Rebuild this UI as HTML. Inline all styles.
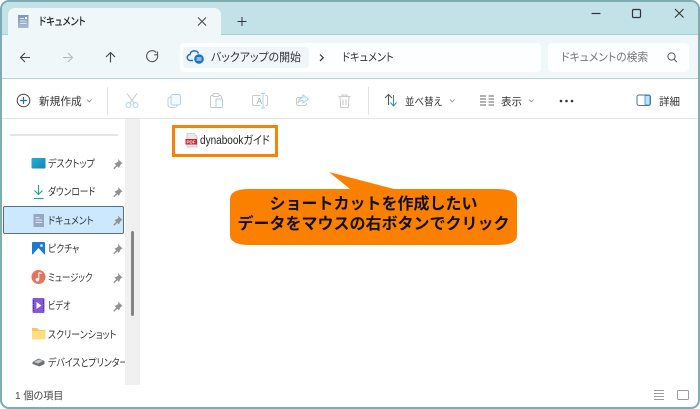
<!DOCTYPE html>
<html lang="ja"><head><meta charset="utf-8">
<style>
html,body{margin:0;padding:0;background:#fff}
body{width:700px;height:409px;overflow:hidden;position:relative;font-family:"Liberation Sans","Noto Sans CJK JP",sans-serif;color:#2b2b2b}
#win{position:absolute;left:0;top:0;width:700px;height:409px;box-sizing:border-box;border:2px solid #7fabb3;border-radius:9px;overflow:hidden;background:#fff}
.a{position:absolute}
.t{position:absolute;white-space:nowrap;font-size:11px;line-height:14px;font-feature-settings:"palt";color:#333;transform-origin:left center}
svg{position:absolute;overflow:visible}
</style></head><body>
<div id="win"></div>
<div class="a" style="left:2px;top:2px;width:696px;height:33px;background:#c3e2e8;border-radius:7px 7px 0 0"></div>
<div class="a" style="left:2px;top:34px;width:696px;height:1px;background:#a9cfd6"></div>
<div class="a" style="left:2px;top:35px;width:696px;height:43px;background:#eff7f9"></div>
<div class="a" style="left:2px;top:78px;width:696px;height:1px;background:#b5d3d9"></div>
<div class="a" style="left:8px;top:8px;width:213px;height:28px;background:#eff7f9;border-radius:7px 7px 0 0"></div>
<div class="a" style="left:2px;top:118px;width:696px;height:1px;background:#e3e6e6"></div>
<div class="a" style="left:180px;top:43px;width:361px;height:29px;background:#fcfeff;border-radius:4px"></div>
<div class="a" style="left:183px;top:47px;width:126px;height:21px;background:#eff5f8;border-radius:4px"></div>
<div class="a" style="left:548px;top:43px;width:141px;height:29px;background:#fcfeff;border-radius:4px"></div>

<svg style="left:0;top:0" width="700" height="120" fill="none">
<defs><linearGradient id="d1" x1="0" y1="0" x2="0" y2="1"><stop offset="0" stop-color="#8096b8"/><stop offset="1" stop-color="#a9bbd3"/></linearGradient></defs>
<rect x="18" y="15" width="10.5" height="13" fill="url(#d1)"/><rect x="20" y="18" width="4" height="1" fill="#dfe7f1"/><rect x="20" y="20.5" width="6.5" height="1" fill="#dfe7f1"/><rect x="20" y="23" width="6.5" height="1" fill="#dfe7f1"/><rect x="25" y="17" width="2" height="2" fill="#fff"/>
<path d="M198 17.500l8 8M206 17.500l-8 8" stroke="#444" stroke-width="1"/>
<path d="M237.500 21.500h9M242 17v9" stroke="#333" stroke-width="1"/>
<path d="M591.500 13.500h9" stroke="#333" stroke-width="1.200"/>
<rect x="632.500" y="9.500" width="8" height="8" rx="1.200" stroke="#333" stroke-width="1.200"/>
<path d="M675 9l8.500 8.500M683.500 9l-8.500 8.500" stroke="#333" stroke-width="1.100"/>
<path d="M30 57.500H21M25 53l-4.500 4.500L25 62" stroke="#444" stroke-width="1.100"/>
<path d="M63 57.500h9.500M68 53l4.500 4.500L68 62" stroke="#b4bcbf" stroke-width="1.100"/>
<path d="M110.500 62.500v-10M106 57l4.500-4.500L115 57" stroke="#444" stroke-width="1.100"/>
<path d="M157.500 55a5.500 5.500 0 1 1-1.200-2.400M157.500 51.500v3.300h-3.300" stroke="#555" stroke-width="1.100"/>
<path d="M193 60.500h-2.500a3 3 0 0 1-.5-6 4.500 4.500 0 0 1 8.500-1" stroke="#1f6fc4" stroke-width="1.500"/>
<circle cx="199" cy="59" r="4.800" fill="#1773c9"/><path d="M196.500 58h5M196.500 60h5" stroke="#fff" stroke-width="1"/>
<path d="M320 54.500l3.200 3.200-3.200 3.200" stroke="#333" stroke-width="1.200"/>
<circle cx="671.500" cy="56.500" r="3.600" stroke="#555" stroke-width="1"/><path d="M674.200 59.300l2.600 2.800" stroke="#555" stroke-width="1"/>
<circle cx="23.500" cy="100.500" r="6.300" stroke="#444" stroke-width="1"/><path d="M20 100.500h7M23.500 97v7" stroke="#1a73c9" stroke-width="1.200"/>
<path d="M87 99.500l2.300 2.300 2.300-2.300" stroke="#888" stroke-width=".8"/>
<path d="M107.500 87v28" stroke="#e1e4e5"/>
<path d="M368.500 87v28" stroke="#e1e4e5"/>
<path d="M127 93.500l7.500 10M137 93.500l-7.500 10" stroke="#c4c8ca" stroke-width="1"/>
<circle cx="128.500" cy="105" r="2.500" stroke="#a8d0f2"/><circle cx="135.500" cy="105" r="2.500" stroke="#a8d0f2"/>
<rect x="168" y="97" width="9" height="10.500" rx="2.500" stroke="#c8cacb"/><rect x="171" y="94.500" width="9.500" height="10.500" rx="2" fill="#f3f9fe" stroke="#a8d0f2"/>
<rect x="210.500" y="95.500" width="11" height="12" rx="1.500" stroke="#c8cacb"/><rect x="213" y="93.500" width="6" height="3" rx="1" fill="#fff" stroke="#c8cacb"/><rect x="216" y="99" width="6.500" height="8.500" rx="1" fill="#fff" stroke="#a8d0f2"/>
<path d="M260.500 95.500h-6.500a1.500 1.500 0 0 0-1.500 1.500v7a1.500 1.500 0 0 0 1.500 1.500h6.500M265.500 95.500h.5a1.500 1.500 0 0 1 1.500 1.500v7a1.500 1.500 0 0 1-1.500 1.500h-.5" stroke="#c8cacb"/><path d="M263 93.500v14.500M261 93.500h4M261 108h4" stroke="#a8d0f2"/>
<path d="M303 97.500h-5a1.500 1.500 0 0 0-1.500 1.500v5a1.500 1.500 0 0 0 1.500 1.500h7a1.500 1.500 0 0 0 1.500-1.500v-1" stroke="#c8cacb"/><path d="M303 97.500v-2.500l5.500 4-5.500 4v-2.500c-2.500 0-4 .8-5 2.500 .5-3 2-5 5-5.500z" stroke="#a8d0f2" fill="#f3f9fe"/>
<path d="M338.500 96.500h12M342 96.500v-1.500h5v1.500M340 96.500l.7 11h7.600l.7-11M343 99.500v5.500M346 99.500v5.500" stroke="#c8cacb"/>
<path d="M388.500 105V94.500M385 98l3.500-3.500L392 98" stroke="#555" stroke-width="1"/><path d="M393.500 95v11M390.500 102.500l3 3.500 3-3.500" stroke="#2a86d8" stroke-width="1"/>
<path d="M450 99.500l2.300 2.300 2.300-2.300" stroke="#888" stroke-width=".8"/>
<path d="M480 96h6M480 99h6M480 102h6M480 105h6M488.500 96h5.500M488.500 99h5.500M488.500 102h5.500M488.500 105h5.500" stroke="#666" stroke-width=".9"/>
<path d="M529 99.500l2.300 2.300 2.300-2.300" stroke="#888" stroke-width=".8"/>
<circle cx="561" cy="101" r="1.300" fill="#333"/><circle cx="566.500" cy="101" r="1.300" fill="#333"/><circle cx="572" cy="101" r="1.300" fill="#333"/>
<rect x="637" y="95" width="13.500" height="10.500" rx="2" stroke="#55707f"/><rect x="645" y="95.500" width="5" height="9.500" rx="1" fill="#bfe0f7" stroke="#2a86d8" stroke-width=".8"/>
<text x="256.500" y="104" font-size="8.500" fill="#a9adb0" font-family="Liberation Sans">A</text>
</svg>

<div class="t" style="left:39px;top:15px;font-size:11px;color:#222;font-weight:500;transform:scaleX(.83)">ドキュメント</div>
<div class="t" style="left:211px;top:51px;font-size:11.500px;transform:scaleX(.95)">バックアップの開始</div>
<div class="t" style="left:342px;top:51px;font-size:11.500px;transform:scaleX(.88)">ドキュメント</div>
<div class="t" style="left:561px;top:51px;font-size:11.500px;color:#777;transform:scaleX(.94)">ドキュメントの検索</div>
<div class="t" style="left:39px;top:95px;font-size:11px;transform:scaleX(.97)">新規作成</div>
<div class="t" style="left:405px;top:95px;font-size:10.500px;transform:scaleX(.9)">並べ替え</div>
<div class="t" style="left:501px;top:95px;font-size:10.500px">表示</div>
<div class="t" style="left:659px;top:95px;font-size:10.500px">詳細</div>

<div class="a" style="left:10px;top:134px;width:108px;height:2px;background:#e6e6e6"></div>
<div class="a" style="left:125px;top:119px;width:15px;height:266px;background:#f0f0f0"></div>
<div class="a" style="left:131px;top:231px;width:3px;height:85px;background:#858585;border-radius:2px"></div>
<div class="a" style="left:3px;top:206px;width:121px;height:28px;box-sizing:border-box;background:#cce8ff;border:1px solid #5b6f7a;border-radius:2px"></div>

<svg style="left:0;top:120px" width="140" height="270" fill="none">
<defs><linearGradient id="g1" x1="0" y1="0" x2="1" y2="1"><stop offset="0" stop-color="#1fb5d8"/><stop offset="1" stop-color="#1a7fb8"/></linearGradient></defs>
<rect x="31.500" y="38" width="14" height="10.500" rx="1" fill="url(#g1)"/>
<path d="M38.500 65v9M34.500 70.500l4 4 4-4" stroke="#12a785" stroke-width="1.100"/><path d="M34 78.500h9.500" stroke="#12a785" stroke-width="1.100"/>
<rect x="33.500" y="94" width="10.500" height="13" fill="#93a8c6"/><rect x="35.500" y="97" width="4" height="1" fill="#dfe7f1"/><rect x="35.500" y="99.500" width="6.500" height="1" fill="#dfe7f1"/><rect x="35.500" y="102" width="6.500" height="1" fill="#dfe7f1"/>
<rect x="32" y="122" width="13" height="13" rx="1" fill="#1f78d1"/><path d="M32 135l6.500-7 6.500 7z" fill="#fff"/><circle cx="41.500" cy="125.500" r="1.300" fill="#fff"/>
<circle cx="38.500" cy="157" r="7" fill="#e1755e"/><path d="M38.800 152.500v7" stroke="#fff" stroke-width="1"/><path d="M38.800 152.500l3 1" stroke="#fff" stroke-width="1"/><circle cx="37.300" cy="159.800" r="1.700" fill="#fff"/>
<rect x="32.500" y="178" width="12" height="15" rx="1" fill="#8557d2"/><path d="M36.500 182v7l5-3.500z" fill="#fff"/><path d="M33.500 180v11M43.500 180v11" stroke="#4d2a96" stroke-width="1" stroke-dasharray="1.500 1"/>
<path d="M32 208h5l2 2h6.500v9.500H32z" fill="#f1c95a"/><path d="M32 211h13.500v8.500H32z" fill="#fbdf83"/>
<path d="M32.500 242l6-3.500 6 2.500v3l-5 2.500-7-2.500z" fill="#6e7376"/><path d="M34 242l5-2.500 4 1.500-5 2.500z" fill="#c5c9cb"/>
<g fill="#8f9396">
<path d="M118 39l4.500 4.500-1.500.6-1.500 2.400-.5 1.500-1.700-1.700-3 2.900-1-1 2.900-3-1.700-1.700 1.500-.5 2.400-1.500z"/>
<path d="M118 67l4.500 4.500-1.500.6-1.500 2.400-.5 1.500-1.700-1.700-3 2.900-1-1 2.900-3-1.700-1.700 1.500-.5 2.400-1.500z"/>
<path d="M118 95.500l4.500 4.500-1.500.6-1.500 2.400-.5 1.500-1.700-1.700-3 2.900-1-1 2.900-3-1.700-1.700 1.500-.5 2.400-1.500z"/>
<path d="M118 124l4.500 4.500-1.500.6-1.500 2.400-.5 1.500-1.700-1.700-3 2.900-1-1 2.900-3-1.700-1.700 1.500-.5 2.400-1.500z"/>
<path d="M118 153l4.500 4.500-1.500.6-1.500 2.400-.5 1.500-1.700-1.700-3 2.900-1-1 2.900-3-1.700-1.700 1.500-.5 2.400-1.500z"/>
<path d="M118 181.500l4.500 4.500-1.500.6-1.500 2.400-.5 1.500-1.700-1.700-3 2.900-1-1 2.900-3-1.700-1.700 1.500-.5 2.400-1.500z"/>
</g>
</svg>
<div class="t" style="left:48px;top:157px;font-size:10.500px;transform:scaleX(.855)">デスクトップ</div>
<div class="t" style="left:48px;top:185px;font-size:10.500px;transform:scaleX(.825)">ダウンロード</div>
<div class="t" style="left:48px;top:214px;font-size:10.500px;transform:scaleX(.85)">ドキュメント</div>
<div class="t" style="left:48px;top:242px;font-size:10.500px;transform:scaleX(.84)">ピクチャ</div>
<div class="t" style="left:48px;top:271px;font-size:10.500px;transform:scaleX(.8)">ミュージック</div>
<div class="t" style="left:48px;top:299px;font-size:10.500px;transform:scaleX(.77)">ビデオ</div>
<div class="t" style="left:48px;top:328px;font-size:10.500px;transform:scaleX(.85)">スクリーンショット</div>
<div class="a" style="left:48px;top:356px;width:77px;height:16px;overflow:hidden"><div class="t" style="left:0;top:0;font-size:10.500px;transform:scaleX(.85)">デバイスとプリンター</div></div>

<div class="t" style="left:15px;top:389px;font-size:10.500px;color:#444;transform:scaleX(.96)">1 個の項目</div>
<svg style="left:0;top:380px" width="700" height="29" fill="none">
<path d="M654 10.500h10M654 13.500h10M654 16.500h10M654 19.500h10" stroke="#9a9a9a"/>
<rect x="677.500" y="10.500" width="11" height="9" rx="1" stroke="#9a9a9a"/>
</svg>

<div class="a" style="left:172px;top:125px;width:106px;height:32px;box-sizing:border-box;border:3px solid #f98200"></div>
<svg style="left:0;top:0" width="300" height="170" fill="none">
<path d="M187 133.500h7l3 3v10.500h-10z" fill="#e9e9e9" stroke="#c4c4c4" stroke-width=".8"/>
<rect x="185.500" y="139" width="11.500" height="5.500" fill="#c9232d"/>
<text x="186.500" y="143.700" font-size="4.500" font-weight="700" fill="#fff" font-family="Liberation Sans">PDF</text>
</svg>
<div class="t" style="left:200px;top:134px;font-size:11.500px;color:#222;transform:scaleX(.87)">dynabookガイド</div>

<svg style="left:0;top:0" width="700" height="409">
<path d="M329 172L394 189H497Q517 189 517 199V235Q517 245 497 245H250Q230 245 230 235V199Q230 189 250 189H350Z" fill="#fb8000"/>
</svg>
<div class="a" style="left:230px;top:195px;width:287px;text-align:center;font-size:16px;line-height:20px;font-weight:700;color:#111;white-space:nowrap">ショートカットを作成したい<br>データをマウスの右ボタンでクリック</div>
</body></html>
